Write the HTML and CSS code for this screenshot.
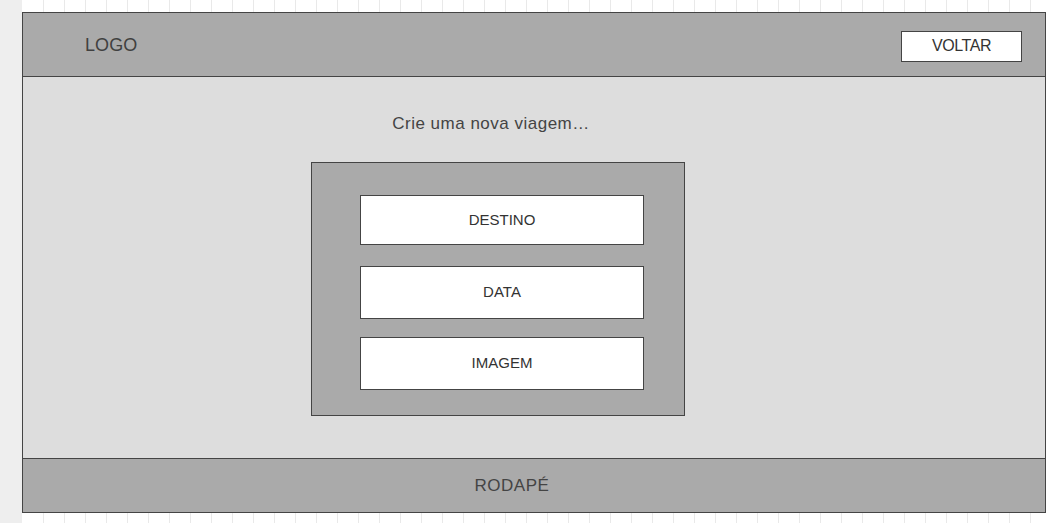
FILE: index.html
```html
<!DOCTYPE html>
<html lang="pt">
<head>
<meta charset="utf-8">
<title>Nova viagem</title>
<link rel="stylesheet" href="styles.css">
</head>
<body>
<div class="sidebar"></div>
<div class="canvas">
  <div class="frame">
    <header class="header">
      <div class="logo">LOGO</div>
      <button class="back">VOLTAR</button>
    </header>
    <main class="main">
      <h1 class="title">Crie uma nova viagem…</h1>
      <div class="panel">
        <div class="field f1">DESTINO</div>
        <div class="field f2">DATA</div>
        <div class="field f3">IMAGEM</div>
      </div>
    </main>
    <footer class="footer">RODAPÉ</footer>
  </div>
</div>
</body>
</html>
```

FILE: styles.css
```css
html, body {
  margin: 0;
  padding: 0;
  height: 100%;
}
body {
  display: flex;
  font-family: "Liberation Sans", Arial, sans-serif;
  color: #404040;
  background: #ffffff;
  overflow: hidden;
}
.sidebar {
  width: 22px;
  flex: none;
  background: #eeeeee;
}
.canvas {
  flex: 1;
  padding-top: 12px;
  background-color: #ffffff;
  background-image: repeating-linear-gradient(to right, transparent 0, transparent 20px, #e9e9e9 20px, #e9e9e9 21px);
  background-position: 1px 0;
}
.frame {
  box-sizing: border-box;
  width: 1024px;
  height: 501px;
  border: 1px solid #444444;
  display: flex;
  flex-direction: column;
}
.header {
  height: 63px;
  flex: none;
  background: #aaaaaa;
  border-bottom: 1px solid #444444;
  display: flex;
  align-items: center;
  justify-content: space-between;
  padding: 0 23px 0 62px;
}
.logo {
  font-size: 18px;
  letter-spacing: 0.1px;
  margin-top: 1px;
}
.back {
  box-sizing: border-box;
  width: 121px;
  height: 31px;
  margin-top: 4px;
  background: #ffffff;
  border: 1px solid #444444;
  font-family: "Liberation Sans", Arial, sans-serif;
  font-size: 16px;
  letter-spacing: -0.4px;
  color: #333333;
  padding: 0 0 2px 0;
}
.main {
  flex: 1;
  background: #dddddd;
  display: flex;
  flex-direction: column;
  padding-left: 289px;
}
.title {
  margin: 0;
  padding-top: 37px;
  width: 358px;
  text-align: center;
  font-weight: normal;
  font-size: 17px;
  letter-spacing: 0.5px;
  line-height: 20px;
  height: 48px;
  color: #444444;
}
.panel {
  box-sizing: border-box;
  width: 374px;
  height: 254px;
  margin-left: -1px;
  background: #aaaaaa;
  border: 1px solid #444444;
  display: flex;
  flex-direction: column;
  padding: 32px 0 0 48px;
}
.field {
  box-sizing: border-box;
  width: 284px;
  background: #ffffff;
  border: 1px solid #444444;
  display: flex;
  align-items: center;
  justify-content: center;
  font-size: 15px;
  color: #333333;
  padding-bottom: 2px;
}
.f1 { height: 50px; }
.f2 { height: 53px; margin-top: 21px; }
.f3 { height: 53px; margin-top: 18px; }
.footer {
  flex: none;
  height: 53px;
  background: #aaaaaa;
  border-top: 1px solid #444444;
  display: flex;
  align-items: center;
  justify-content: center;
  padding-right: 44px;
  font-size: 17px;
  letter-spacing: 0.5px;
  color: #444444;
}
```
